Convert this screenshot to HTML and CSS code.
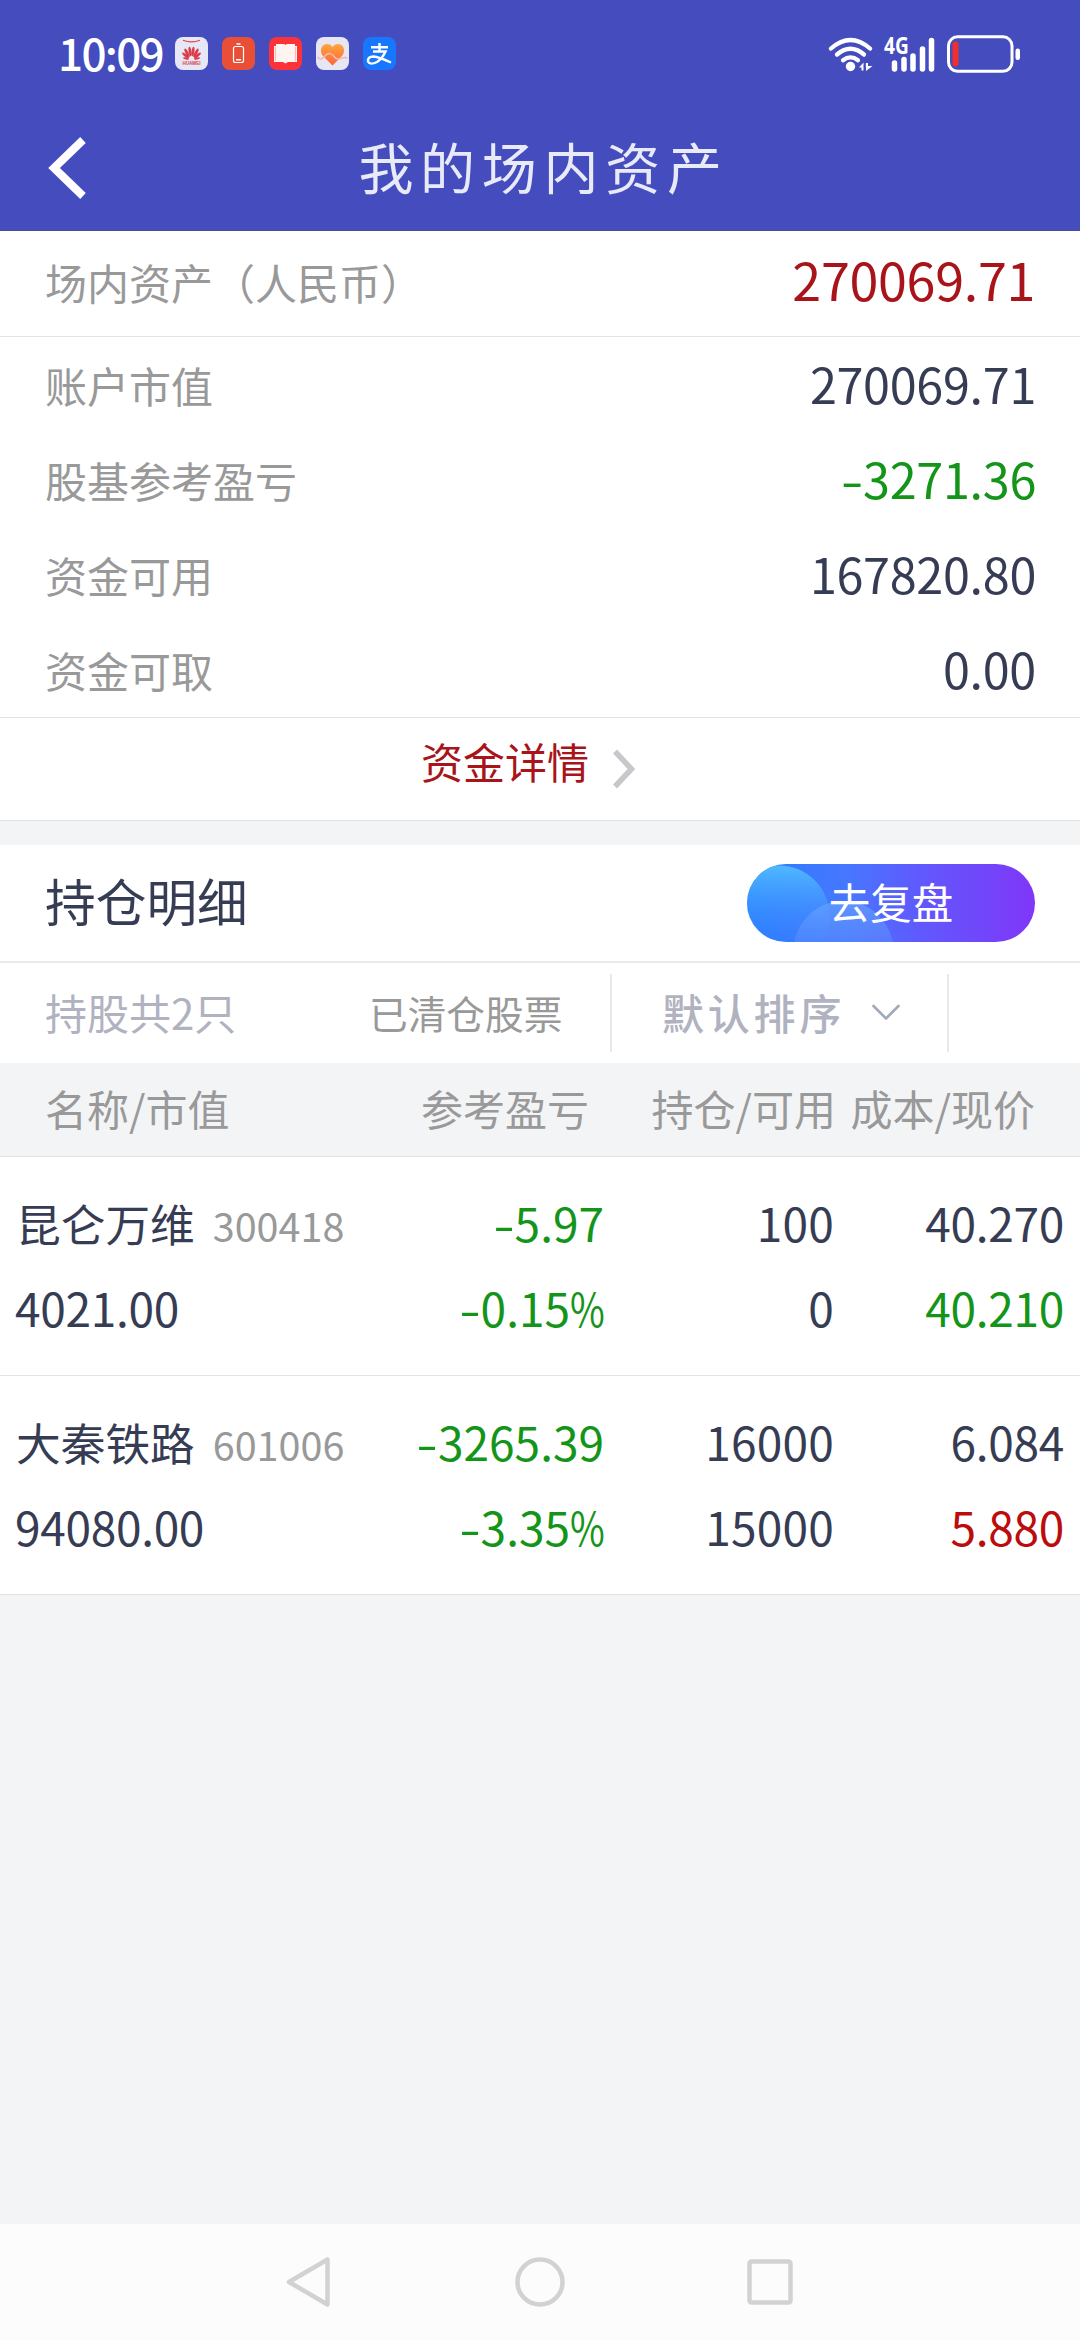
FILE: index.html
```html
<!DOCTYPE html>
<html lang="zh-CN">
<head>
<meta charset="utf-8">
<title>我的场内资产</title>
<link rel="stylesheet" href="styles.css">
</head>
<body>
<div class="screen">
  <header class="top">
    <div class="status">
      <span class="clock">10:09</span>
      <div class="apps">
        <svg class="app" viewBox="0 0 33 33">
          <rect width="33" height="33" rx="8" fill="#e6e8f6"/>
          <path d="M8 3.200Q16.500 6.500 25 3.200" fill="none" stroke="#e0424e" stroke-width="1.200"/>
          <g fill="#dc3b48">
            <ellipse cx="15" cy="14.500" rx="1.400" ry="4.800" transform="rotate(-8 15 14.500)"/>
            <ellipse cx="18" cy="14.500" rx="1.400" ry="4.800" transform="rotate(8 18 14.500)"/>
            <ellipse cx="12" cy="16" rx="1.400" ry="4.900" transform="rotate(-28 12 16)"/>
            <ellipse cx="21" cy="16" rx="1.400" ry="4.900" transform="rotate(28 21 16)"/>
            <ellipse cx="10.500" cy="18.500" rx="1.300" ry="4.200" transform="rotate(-50 10.500 18.500)"/>
            <ellipse cx="22.500" cy="18.500" rx="1.300" ry="4.200" transform="rotate(50 22.500 18.500)"/>
            <ellipse cx="11" cy="21.500" rx="1" ry="3" transform="rotate(-80 11 21.500)"/>
            <ellipse cx="22" cy="21.500" rx="1" ry="3" transform="rotate(80 22 21.500)"/>
          </g>
          <text x="16.500" y="28.300" text-anchor="middle" class="brand">HUAWEI</text>
        </svg>
        <svg class="app" viewBox="0 0 33 33">
          <rect width="33" height="33" rx="8" fill="#e94f36"/>
          <rect x="11.500" y="9.500" width="10" height="16" rx="2" fill="none" stroke="#fff" stroke-width="1.200"/>
          <path d="M14.500 7h4M14 22.800h5" stroke="#fff" stroke-width="1.500"/>
        </svg>
        <svg class="app" viewBox="0 0 33 33">
          <rect width="33" height="33" rx="8" fill="#fb3338"/>
          <path d="M5 9h2V7h7q2.500 0 2.500 1.300Q16.500 7 19 7h7v2h2v16h-9l-2.500 1.500L14 25H5z" fill="#fff4f2"/>
          <path d="M6.500 10v14M26.500 10v14" stroke="#fdb9b7" stroke-width="1.200"/>
        </svg>
        <svg class="app" viewBox="0 0 33 33">
          <defs><linearGradient id="heart" x1="0" y1="0" x2="0" y2="1"><stop offset="0" stop-color="#ffa63c"/><stop offset="1" stop-color="#fb6440"/></linearGradient></defs>
          <rect width="33" height="33" rx="8" fill="#e6e7f3"/>
          <path d="M16.500 28.500 7 19C2.500 13.500 6 7 11 7q3.500 0 5.500 3Q18.500 7 22 7c5 0 8.500 6.500 4 12z" fill="url(#heart)"/>
          <path d="M1.500 20q3 4 6.500 0t6-3.500q2.500.5 4.500 3.500t6 1.500 7-.5" fill="none" stroke="#f8b9a4" stroke-width="1.600"/>
        </svg>
        <svg class="app" viewBox="0 0 33 33">
          <rect width="33" height="33" rx="8" fill="#1777fe"/>
          <path d="M8 10.300h17M16.500 6v8.500M10 14.500h12.500Q19 22 14 25q-7 3.500-9-.5-.5-5 5.500-5 5 .3 17.500 6" fill="none" stroke="#fff" stroke-width="2.400"/>
        </svg>
      </div>
      <div class="signals">
        <svg width="46" height="36" viewBox="0 0 46 36">
          <g fill="none" stroke="#fff" stroke-width="4.300" stroke-linecap="round">
            <path d="M3 12.500Q22.500-4.500 42 12.500"/>
            <path d="M9 18.500Q22.500 7 36 18.500"/>
            <path d="M15 24.300Q22.500 18.500 30 24.300"/>
          </g>
          <circle cx="22.500" cy="30.500" r="4.700" fill="#fff"/>
          <path d="M31 31.500 35.500 26.500V34.500H33.500V31.500zM37.800 27H40v3h4.500L38 35z" fill="#fff"/>
        </svg>
        <div class="cell">
          <span class="net">4G</span>
          <svg class="bars" width="52" height="36" viewBox="0 0 52 36">
            <path d="M10.500 27v6M20 23.500V33M29 20v13M38.500 13v20M47.500 4.500V33" stroke="#fff" stroke-width="5.500" stroke-linecap="round"/>
          </svg>
        </div>
        <svg width="76" height="38" viewBox="0 0 76 38">
          <rect x="2.500" y="1.800" width="63.500" height="34.500" rx="9" fill="none" stroke="#fff" stroke-width="3"/>
          <rect x="6.500" y="6.500" width="6" height="25" rx="3" fill="#ee302c"/>
          <rect x="69.500" y="13.500" width="4.500" height="11.500" rx="2.200" fill="#fff"/>
        </svg>
      </div>
    </div>
    <div class="nav">
      <svg class="back" width="40" height="64" viewBox="0 0 40 64"><path d="M35 4 6 32l29 28" fill="none" stroke="#fff" stroke-width="8"/></svg>
      <h1 class="title">我的场内资产</h1>
      <span class="nav-end"></span>
    </div>
  </header>

  <section class="summary">
    <div class="total"><span class="label">场内资产（人民币）</span><span class="total-value">270069.71</span></div>
    <div class="rows">
      <div class="row"><span class="label">账户市值</span><span class="value">270069.71</span></div>
      <div class="row"><span class="label">股基参考盈亏</span><span class="value down"><span class="minus">-</span>3271.36</span></div>
      <div class="row"><span class="label">资金可用</span><span class="value">167820.80</span></div>
      <div class="row"><span class="label">资金可取</span><span class="value">0.00</span></div>
    </div>
    <div class="detail">
      <span>资金详情</span>
      <svg class="more" width="26" height="40" viewBox="0 0 26 40"><path d="M4 2.500 20.500 20 4 37.500" fill="none" stroke="#c8c8cc" stroke-width="5.500"/></svg>
    </div>
  </section>

  <section class="positions">
    <div class="heading">
      <h2>持仓明细</h2>
      <div class="review">
        <svg class="review-bg" width="288" height="78" viewBox="0 0 288 78">
          <defs>
            <linearGradient id="pill"><stop offset="0" stop-color="#2a7dff"/><stop offset=".35" stop-color="#4777ff"/><stop offset=".6" stop-color="#6059fd"/><stop offset="1" stop-color="#8036f8"/></linearGradient>
            <linearGradient id="bub" x1="0" y1="0" x2="0" y2="1"><stop offset="0" stop-color="#54c4ff" stop-opacity=".85"/><stop offset=".75" stop-color="#3a8cff" stop-opacity=".1"/></linearGradient>
            <linearGradient id="bub2" x1="0" y1="0" x2="0" y2=".6"><stop offset="0" stop-color="#6aa5ff" stop-opacity=".65"/><stop offset="1" stop-color="#5c8bff" stop-opacity=".3"/></linearGradient>
            <clipPath id="clip"><rect width="288" height="78" rx="39"/></clipPath>
          </defs>
          <g clip-path="url(#clip)">
            <rect width="288" height="78" fill="url(#pill)"/>
            <circle cx="32" cy="52" r="50.500" fill="url(#bub)"/>
            <circle cx="96.500" cy="87" r="50" fill="url(#bub2)"/>
          </g>
        </svg>
        <span class="review-text">去复盘</span>
      </div>
    </div>
    <div class="filters">
      <span class="count">持股共2只</span>
      <span class="cleared">已清仓股票</span>
      <div class="sort">
        <span>默认排序</span>
        <svg width="30" height="18" viewBox="0 0 30 18"><path d="M2.500 2 15 14.500 27.500 2" fill="none" stroke="#a0aaba" stroke-width="2.600" stroke-linecap="round" stroke-linejoin="round"/></svg>
      </div>
    </div>
    <div class="thead"><span>名称/市值</span><span>参考盈亏</span><span>持仓/可用</span><span>成本/现价</span></div>
    <div class="holding">
      <div class="name">昆仑万维<span class="code">300418</span></div><div class="down"><span class="minus">-</span>5.97</div><div class="qty">100</div><div class="price">40.270</div>
      <div class="worth">4021.00</div><div class="down"><span class="minus">-</span>0.15<span class="percent">%</span></div><div class="qty">0</div><div class="price down">40.210</div>
    </div>
    <div class="holding">
      <div class="name">大秦铁路<span class="code">601006</span></div><div class="down"><span class="minus">-</span>3265.39</div><div class="qty">16000</div><div class="price">6.084</div>
      <div class="worth">94080.00</div><div class="down"><span class="minus">-</span>3.35<span class="percent">%</span></div><div class="qty">15000</div><div class="price up">5.880</div>
    </div>
  </section>

  <footer class="sysnav">
    <svg width="50" height="56" viewBox="0 0 50 56"><path d="M43.500 5.500v45L5 28z" fill="none" stroke="#d2d2d2" stroke-width="4.500" stroke-linejoin="round"/></svg>
    <svg width="56" height="56" viewBox="0 0 56 56"><circle cx="28" cy="28" r="22.500" fill="none" stroke="#d2d2d2" stroke-width="4.500"/></svg>
    <svg width="50" height="56" viewBox="0 0 50 56"><rect x="3.500" y="7.500" width="41" height="41" rx="2" fill="none" stroke="#d2d2d2" stroke-width="4.500"/></svg>
  </footer>
</div>
</body>
</html>
```
FILE: styles.css
```css
* { box-sizing: border-box; }
body {
  margin: 0;
  font-family: "Noto Sans CJK SC", sans-serif;
  color: #363c53;
  background: #f3f4f6;
}
svg { display: block; flex: none; }
.screen {
  width: 1080px;
  height: 2340px;
  display: flex;
  flex-direction: column;
  overflow: hidden;
  white-space: nowrap;
}
.top {
  height: 231px;
  background: #444cbe;
  border-bottom: 1px solid #4a4c8e;
  color: #fff;
}
.status {
  height: 107px;
  padding: 0 58px;
  display: flex;
  align-items: center;
}
.clock {
  width: 117px;
  font-size: 44px;
  font-weight: 500;
  line-height: 60px;
  letter-spacing: -1.700px;
  margin-top: -4px;
}
.apps { display: flex; gap: 14px; }
.app { width: 33px; height: 33px; }
.brand { font: 700 4.500px "Liberation Sans", sans-serif; fill: #dc3b48; }
.cell { display: grid; width: 52px; height: 36px; }
.bars, .net { grid-area: 1 / 1; }
.net {
  font: 700 23px/26px "Noto Sans", sans-serif;
  transform: scaleX(.83);
  transform-origin: 0 0;
  margin-top: -4px;
}
.signals {
  margin-left: auto;
  display: flex;
  align-items: center;
  gap: 10px;
}
.nav {
  height: 122px;
  padding: 0 46px 0 48px;
  display: flex;
  align-items: center;
  justify-content: space-between;
}
.nav-end { width: 40px; }
.title {
  margin: -7px 0 0 5px;
  font-size: 55px;
  font-weight: 400;
  letter-spacing: 6.700px;
  color: #e9eaf8;
}
.summary { background: #fff; }
.total, .row {
  display: flex;
  align-items: center;
  justify-content: space-between;
  padding: 0 45px;
}
.total { height: 106px; border-bottom: 1px solid #e2e3e4; }
.total .label { margin-top: -3px; }
.total-value {
  font-size: 52px;
  line-height: 60px;
  letter-spacing: -.3px;
  color: #a81419;
  margin-top: -10px;
}
.rows { border-bottom: 1px solid #e2e3e4; }
.row { height: 95px; }
.label {
  font-size: 42px;
  line-height: 60px;
  color: #999;
}
.value {
  font-size: 48.500px;
  line-height: 60px;
  letter-spacing: -.3px;
  margin: -3px -1px 0 0;
}
.detail {
  height: 103px;
  padding: 0 0 17px 421px;
  display: flex;
  align-items: center;
  gap: 22px;
  border-bottom: 1px solid #e2e3e4;
  font-size: 42px;
  line-height: 60px;
  color: #a81419;
}
.more { margin-top: 16px; }
.down { color: #14951a; }
.up { color: #bb0c0e; }
.minus {
  display: inline-block;
  width: 22px;
  text-align: center;
  transform: scaleX(1.350);
}
.percent {
  display: inline-block;
  width: 34px;
  transform: scaleX(.82);
  transform-origin: 0 0;
}
.positions { margin-top: 24px; background: #fff; }
.heading {
  height: 118px;
  padding: 0 45px;
  display: flex;
  align-items: center;
  justify-content: space-between;
  border-bottom: 2px solid #e8eceb;
}
.heading h2 {
  margin: -6px 0 0;
  font-size: 50.700px;
  font-weight: 400;
}
.review {
  width: 288px;
  height: 78px;
  display: grid;
  place-items: center;
}
.review-bg, .review-text { grid-area: 1 / 1; }
.review-text {
  font-size: 41.500px;
  line-height: 60px;
  color: #fff;
  margin-top: -5px;
  z-index: 1;
}
.filters {
  height: 100px;
  padding: 0 0 0 45px;
  display: flex;
  align-items: center;
}
.count {
  width: 324px;
  font-size: 42px;
  line-height: 60px;
  color: #b0b3bf;
  margin-top: -2px;
}
.cleared {
  width: 241px;
  font-size: 38.700px;
  line-height: 60px;
  color: #999;
  margin-top: -3px;
}
.sort {
  width: 339px;
  height: 78px;
  padding-left: 50px;
  display: flex;
  align-items: center;
  gap: 26px;
  border: solid #e6e8ee;
  border-width: 0 2px;
  font-size: 42px;
  font-weight: 500;
  line-height: 60px;
  letter-spacing: 3.800px;
  color: #b0b3bf;
}
.sort span { margin-top: -3px; }
.thead {
  height: 94px;
  padding: 0 45px 3px;
  display: grid;
  grid-template-columns: 300px 244px 247px 199px;
  align-items: center;
  text-align: right;
  background: #f3f4f6;
  border-bottom: 1px solid #e2e3e4;
  font-size: 42px;
  line-height: 60px;
  color: #999;
}
.thead :first-child { text-align: left; }
.holding {
  height: 219px;
  padding: 23px 16px 0 15px;
  display: grid;
  grid-template-columns: 341px 248px 230px 230px;
  grid-auto-rows: 85px;
  text-align: right;
  font-size: 46px;
  line-height: 85px;
  border-bottom: 1px solid #e2e3e4;
}
.holding > :nth-child(4n + 1) { text-align: left; }
.name { font-size: 44.700px; padding-left: 1px; }
.code {
  margin-left: 18px;
  font-size: 39.500px;
  color: #999;
}
.worth, .price { letter-spacing: -.3px; }
.qty { letter-spacing: .2px; }
.sysnav {
  height: 116px;
  margin-top: auto;
  padding: 0 284px;
  display: flex;
  align-items: center;
  justify-content: space-between;
  background: #fcfcfc;
}
```
